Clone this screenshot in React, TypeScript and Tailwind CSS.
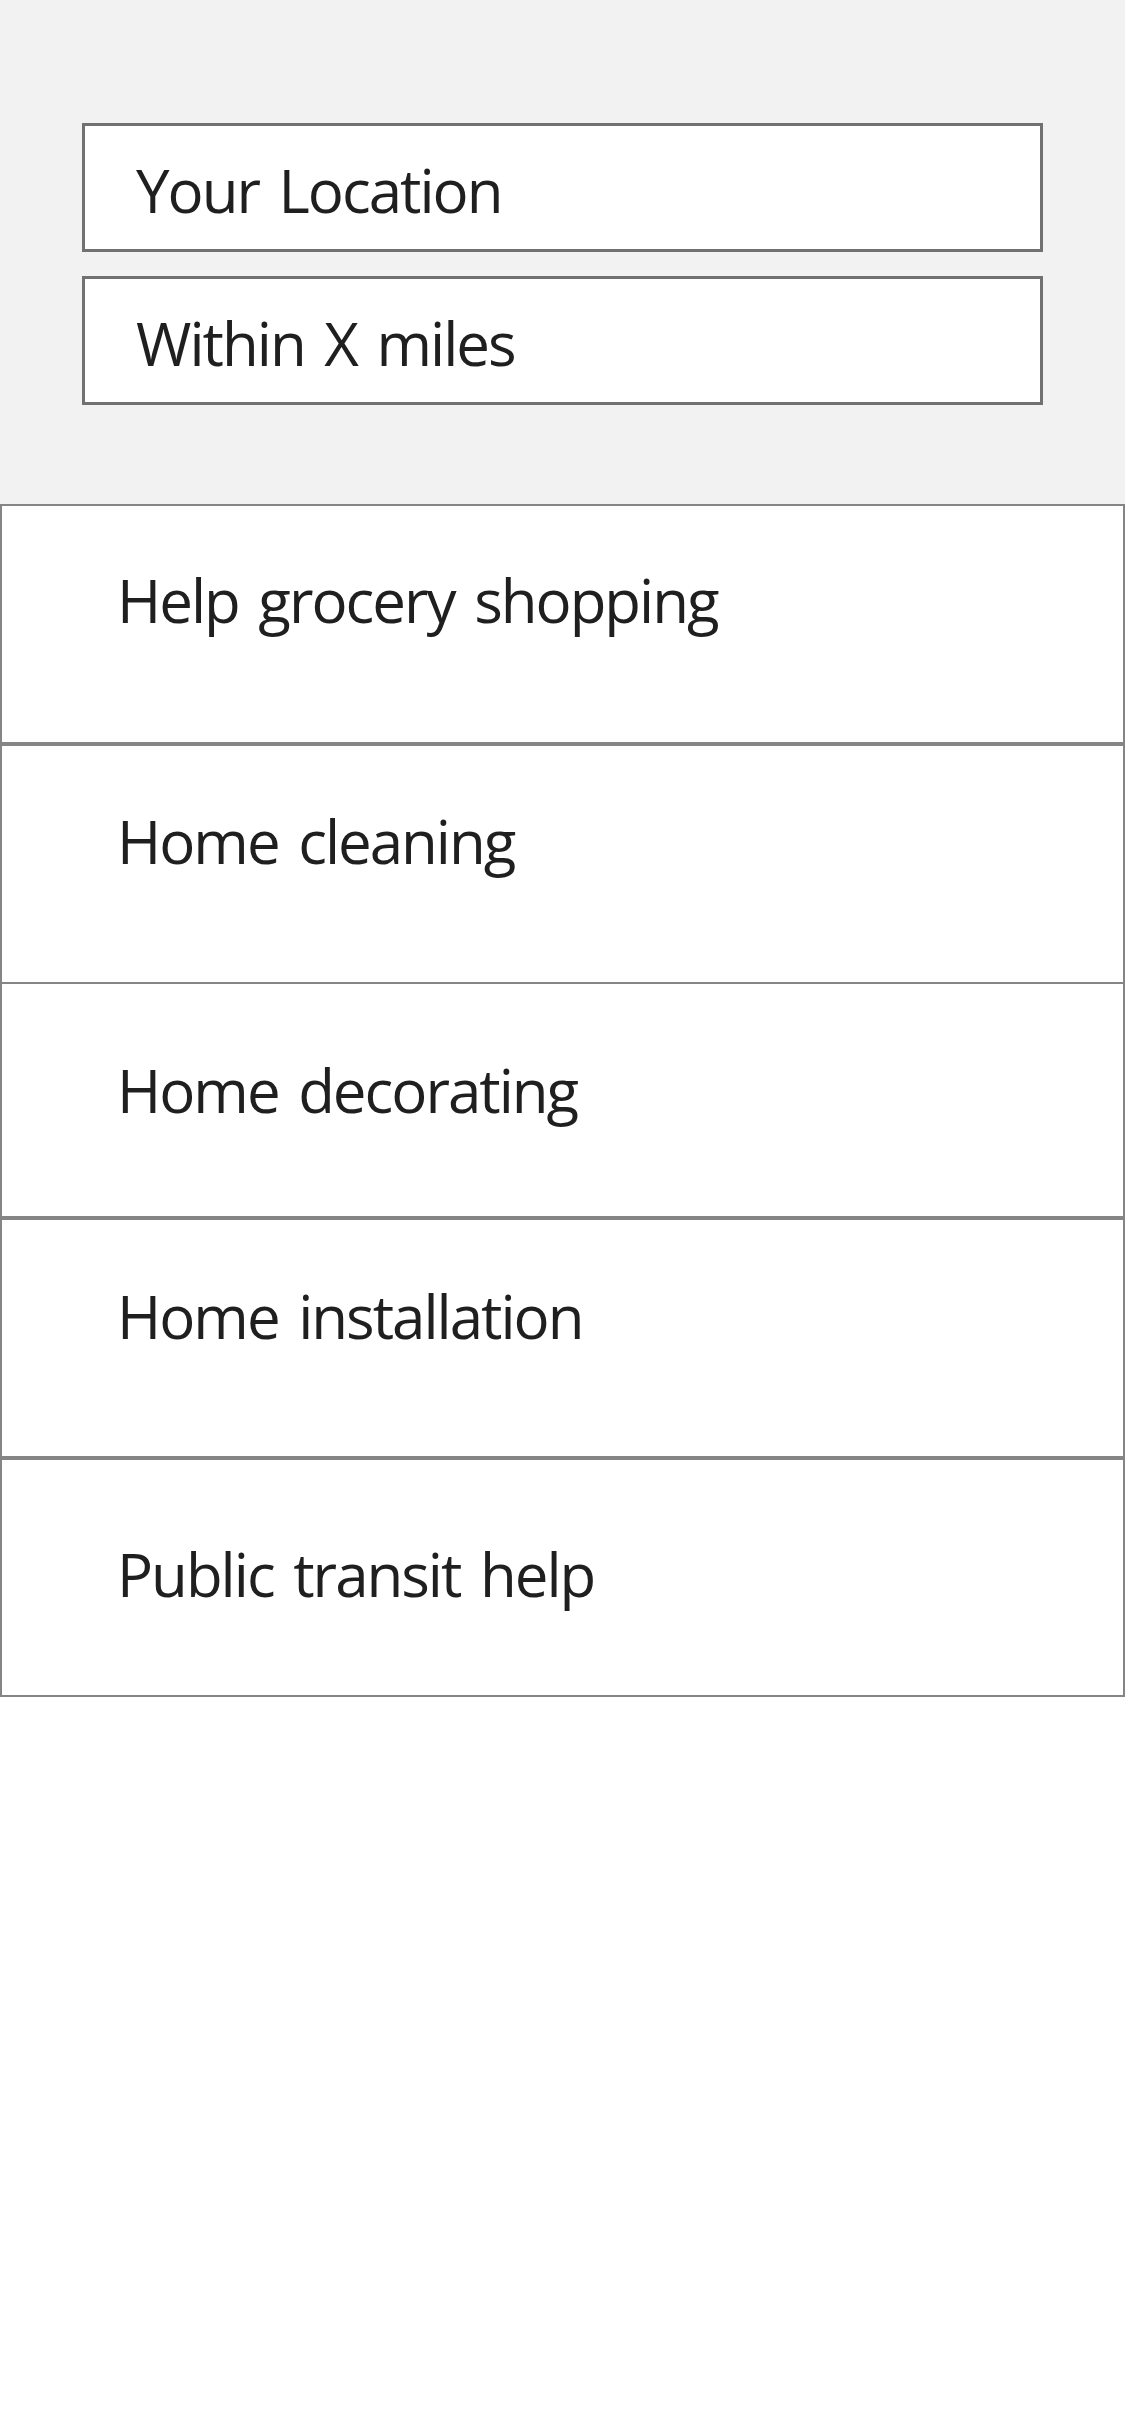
const rows = [
  { label: "Help grocery shopping", cls: "h-[240px] border-t-2 border-b-2 pt-[64px]" },
  { label: "Home cleaning", cls: "h-[240px] border-t-2 border-b-2 pt-[65px]" },
  { label: "Home decorating", cls: "h-[234px] border-b-2 pt-[76px]" },
  { label: "Home installation", cls: "h-[240px] border-t-2 border-b-2 pt-[66px]" },
  { label: "Public transit help", cls: "h-[239px] border-t-2 border-b-2 pt-[84px]" },
]

export default function App() {
  return (
    <div className="w-[1125px] min-h-[2436px] bg-white text-[#1f1f1f] font-['Open_Sans',sans-serif] tracking-[-2px] [word-spacing:6px]">
      <section className="bg-[#f2f2f2] h-[504px] pt-[123px] px-[82px] flex flex-col gap-[24px]">
        <div className="h-[129px] border-[3px] border-[#717171] bg-white pl-[51px] pt-[34px] text-[60px] leading-none">
          Your Location
        </div>
        <div className="h-[129px] border-[3px] border-[#717171] bg-white pl-[51px] pt-[34px] text-[60px] leading-none">
          Within X miles
        </div>
      </section>
      <ul>
        {rows.map((r) => (
          <li
            key={r.label}
            className={`border-x-2 border-[#858585] pl-[115px] text-[60px] leading-none ${r.cls}`}
          >
            {r.label}
          </li>
        ))}
      </ul>
    </div>
  )
}
